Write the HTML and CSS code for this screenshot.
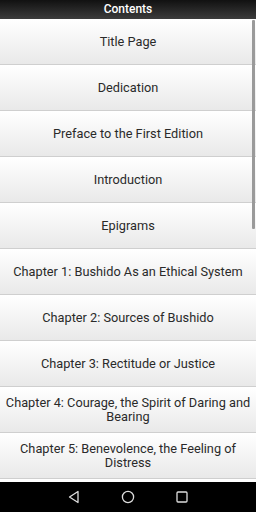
FILE: index.html
```html
<!DOCTYPE html>
<html lang="en">
<head>
	<meta charset="UTF-8">
	<title>Contents</title>
	<link rel="stylesheet" href="styles.css">
</head>
<body>
	<div class="app">
		<div class="header">Contents</div>
		<div class="list">
			<div class="item">Title Page</div>
			<div class="item">Dedication</div>
			<div class="item">Preface to the First Edition</div>
			<div class="item">Introduction</div>
			<div class="item">Epigrams</div>
			<div class="item">Chapter 1: Bushido As an Ethical System</div>
			<div class="item">Chapter 2: Sources of Bushido</div>
			<div class="item">Chapter 3: Rectitude or Justice</div>
			<div class="item">Chapter 4: Courage, the Spirit of Daring and Bearing</div>
			<div class="item">Chapter 5: Benevolence, the Feeling of Distress</div>
			<div class="scrollbar"></div>
		</div>
		<div class="navbar">
			<svg width="14" height="14" viewBox="0 0 14 14"><path d="M11 1.5 L2.5 7 L11 12.5 Z" fill="none" stroke="#ddd" stroke-width="1.3" stroke-linejoin="round"/></svg>
			<svg width="14" height="14" viewBox="0 0 14 14"><circle cx="7" cy="7" r="5.6" fill="none" stroke="#ddd" stroke-width="1.3"/></svg>
			<svg width="14" height="14" viewBox="0 0 14 14"><rect x="2" y="2" width="10" height="10" rx="1" fill="none" stroke="#ddd" stroke-width="1.3"/></svg>
		</div>
	</div>
</body>
</html>
```

FILE: styles.css
```css
*{
	margin:0;
	padding:0;
	box-sizing:border-box;
}
html,body{
	width:256px;
	height:512px;
}
body{
	background:#fff;
	overflow:hidden;
	font-family:Roboto,"Liberation Sans",sans-serif;
}
.app{
	display:flex;
	flex-direction:column;
	height:512px;
}
.header{
	height:19px;
	flex:none;
	background:linear-gradient(#111,#3c3c3c);
	color:#fff;
	font-size:12px;
	font-weight:500;
	text-align:center;
	line-height:19px;
}
.list{
	position:relative;
	flex:1;
	overflow:hidden;
	border-bottom:3px solid #fff;
}
.item{
	height:46px;
	display:flex;
	align-items:center;
	justify-content:center;
	text-align:center;
	padding:0 2px;
	font-size:12.75px;
	line-height:14px;
	color:#2a2a2a;
	background:linear-gradient(#fff,#e9e9e9);
	border-bottom:1px solid #cfcfcf;
}
.scrollbar{
	position:absolute;
	right:1px;
	top:1px;
	width:3px;
	height:209px;
	background:#9a9a9a;
	border-radius:1px;
}
.navbar{
	height:30px;
	flex:none;
	background:#000;
	display:flex;
	align-items:center;
	justify-content:center;
	gap:40px;
}
```
